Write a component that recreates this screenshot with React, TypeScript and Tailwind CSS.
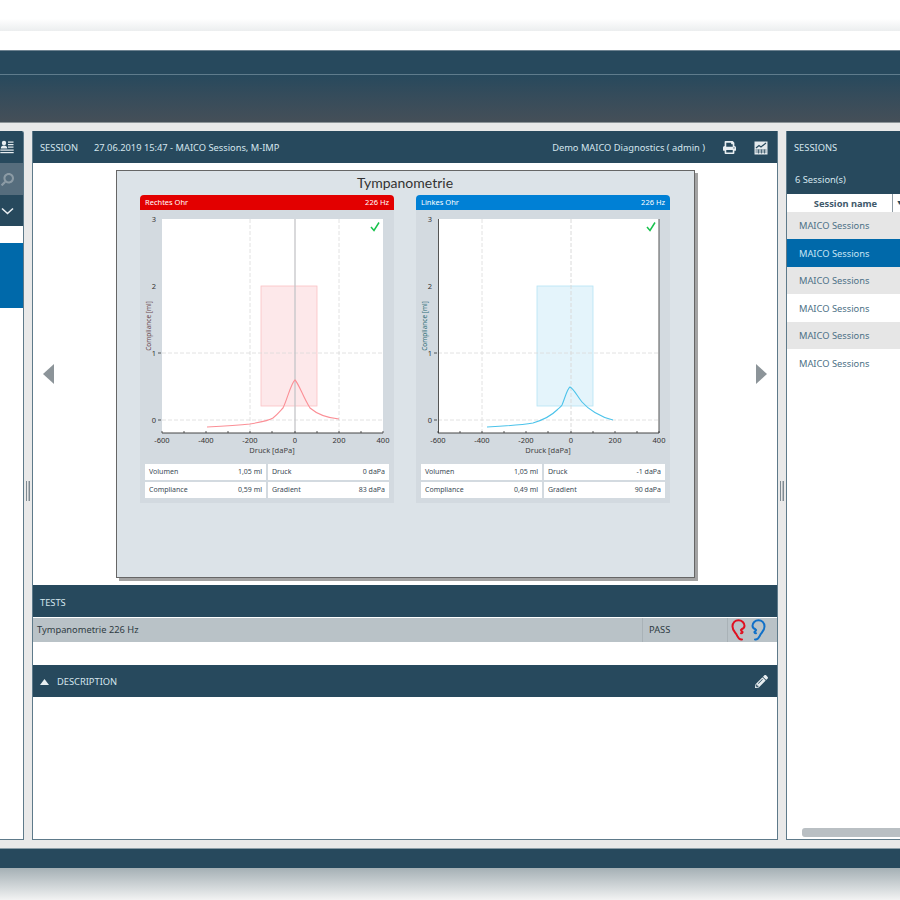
import { FaPrint, FaPencilAlt, FaSearch } from "react-icons/fa";

const font = { fontFamily: '"Noto Sans", "Open Sans", sans-serif' };

function Ear({ color, flip }: { color: string; flip?: boolean }) {
  return (
    <svg width="15" height="22" viewBox="0 0 15 22" fill="none" className={flip ? "-scale-x-100" : ""}>
      <path d="M11 20.500c-3 .5-4-2-5-4C5 14 1.500 12 1.500 7.500 1.500 3.500 4.200 1.300 7.500 1.300c3.500 0 6 2.500 6 5.500 0 2-1.500 3-3 3.500-1 .5-.5 1.500.5 2 1 .7 .5 2-1 2" stroke={color} strokeWidth="2" strokeLinecap="round" strokeLinejoin="round" />
    </svg>
  );
}

function UserListIcon() {
  return (
    <svg width="14" height="14" viewBox="0 0 14 14" fill="#e8eef1">
      <circle cx="4" cy="3" r="2.200" />
      <path d="M0.800 8.500c0-2 1.200-3 3.200-3s3.200 1 3.200 3z" />
      <rect x="8" y="1.500" width="5.500" height="1.200" />
      <rect x="8" y="4" width="5.500" height="1.200" />
      <rect x="8" y="6.500" width="5.500" height="1.200" />
      <rect x="0.300" y="9.500" width="13.400" height="1.200" />
      <rect x="0.300" y="12" width="13.400" height="1.200" />
    </svg>
  );
}

function ReportIcon() {
  return (
    <svg width="14" height="14" viewBox="0 0 14 14">
      <rect x="0.500" y="0.500" width="13" height="13" fill="#e4eaed" />
      <path d="M2 7l3-2.500 2 1.500 5-4" stroke="#27495d" strokeWidth="1.200" fill="none" />
      <path d="M1.500 9h11M1.500 11h11M4.500 8.500v4M7.500 8.500v4M10.500 8.500v4" stroke="#27495d" strokeWidth="0.700" />
    </svg>
  );
}

type ChartProps = {
  title: string;
  head: string;
  curve: string;
  rectFill: string;
  rectStroke: string;
  labelColor: string;
  side: "L" | "R";
  rows: [string, string][];
};

function Chart({ title, head, curve, rectFill, rectStroke, labelColor, side, rows }: ChartProps) {
  const ticks = [22, 66, 110, 155, 199, 243];
  const labels = ["-600", "-400", "-200", "0", "200", "400"];
  const hTicks = [22, 44, 66, 88, 110, 132, 155, 177, 199, 221, 243];
  return (
    <div className="w-[254px] h-[308px] flex flex-col">
      <div className={`h-[15px] rounded-t-[4px] flex items-center justify-between px-[5px] text-[7.5px] text-white ${head}`}>
        <span>{title}</span>
        <span>226 Hz</span>
      </div>
      <div className="flex-1 bg-[#d3dae0] flex flex-col">
        <svg width="254" height="253" viewBox="0 0 254 253" className="block" style={font}>
          <rect x="22" y="9" width="221" height="214" fill="#fff" />
          <rect x="121" y="76" width="56" height="120" fill={rectFill} stroke={rectStroke} strokeWidth="0.800" />
          <path
            d={side === "L" ? "M110 9v214M199 9v214M22 143h221M22 210h221" : "M66 9v214M22 143h221M22 210h221"}
            stroke="#dadada"
            strokeWidth="0.800"
            strokeDasharray="4 2"
          />
          {side === "L" ? (
            <path d="M155 9v214" stroke="#c5c5c8" strokeWidth="1.300" />
          ) : (
            <path d="M155 9v214" stroke="#dadada" strokeWidth="1" strokeDasharray="4 2" />
          )}
          {side === "R" && <path d="M22.500 9v214M243 9v214" stroke="#555" strokeWidth="1" />}
          <path d="M22 223h221" stroke="#444" strokeWidth="1" />
          {hTicks.map((x) => (
            <path key={x} d={`M${x} 223v-2`} stroke="#333" strokeWidth="0.800" />
          ))}
          <path d={curve} fill="none" stroke={side === "L" ? "#fb8f96" : "#4cc3ea"} strokeWidth="1.100" />
          <path d="M231 17l3 3.500 5-8" fill="none" stroke="#17c24c" strokeWidth="1.500" />
          {["3", "2", "1", "0"].map((t, i) => (
            <text key={t} x="16" y={[11.500, 78.500, 145.500, 212.500][i]} fontSize="7.500" textAnchor="end" fill="#333">{t}</text>
          ))}
          <path d="M18 143h3M18 210h3" stroke="#333" strokeWidth="0.800" />
          {ticks.map((x, i) => (
            <text key={x} x={x} y="233" fontSize="7.500" textAnchor="middle" fill="#333">{labels[i]}</text>
          ))}
          <text x="132" y="243" fontSize="7.500" textAnchor="middle" fill="#444">Druck [daPa]</text>
          <text transform="translate(11,116) rotate(-90)" fontSize="6.500" textAnchor="middle" fill={labelColor}>Compliance [ml]</text>
        </svg>
        <div className="grid grid-cols-2 gap-[2px] px-[5px] pt-[1px]">
          {rows.map(([k, v]) => (
            <div key={k} className="bg-white h-[16px] flex items-center justify-between px-[4px] text-[7px] text-[#3a4a55]">
              <span>{k}</span>
              <span>{v}</span>
            </div>
          ))}
        </div>
      </div>
    </div>
  );
}

function Bar({ children, className = "" }: { children: React.ReactNode; className?: string }) {
  return <div className={`h-[32px] shrink-0 bg-[#27495d] flex items-center text-[#d5e6ee] text-[9.3px] pt-[1px] ${className}`}>{children}</div>;
}

function Grip() {
  return (
    <div className="w-[8px] shrink-0 flex items-center justify-center">
      <div className="w-[4px] h-[20px] border-x border-[#7f8a91] mt-[10px] flex justify-center">
        <div className="w-px h-full bg-[#b7bdc1]" />
      </div>
    </div>
  );
}

const sessions = [
  "bg-[#e6e6e6] h-[27px] text-[#4d7186]",
  "bg-[#0069aa] h-[28px] text-[#c7e4f4]",
  "bg-[#e6e6e6] h-[27px] text-[#4d7186]",
  "bg-white h-[28px] text-[#4d7186]",
  "bg-[#e6e6e6] h-[27px] text-[#4d7186]",
  "bg-white h-[28px] text-[#4d7186]",
];

export default function App() {
  return (
    <div className="w-[900px] h-[900px] overflow-hidden flex flex-col bg-white" style={font}>
      <div className="h-[31px] shrink-0 bg-gradient-to-b from-white from-60% to-[#eceeef] " />
      <div className="h-[19px] shrink-0 bg-white" />

      <div className="h-[24px] shrink-0 bg-[#27495d] border-t border-[#6d8290]" />
      <div className="h-px shrink-0 bg-[#5f7c8c]" />
      <div className="h-[48px] shrink-0 bg-gradient-to-b from-[#27495d] to-[#454f58] border-b border-[#8d9498]" />

      <div className="flex-1 min-h-0 bg-[#e9e9e9] pt-[8px] pb-[8px] flex">
        <div className="w-[24px] shrink-0 flex flex-col bg-white border-r border-b border-[#5e7a8a] rounded-tr-[2px] overflow-hidden">
          <div className="h-[32px] bg-[#27495d] flex items-center justify-end pr-[9px]"><UserListIcon /></div>
          <div className="h-[32px] bg-[#566d7d] flex items-center justify-end pr-[9px]">
            <FaSearch className="text-[#8c9ba5] text-[13px] -scale-x-100" />
          </div>
          <div className="h-[31px] bg-[#27495d] flex items-center justify-end pr-[9px]">
            <svg width="13" height="8" viewBox="0 0 13 8" fill="none"><path d="M1 1.500l5.500 5 5.500-5" stroke="#e8eef1" strokeWidth="1.600" /></svg>
          </div>
          <div className="h-[17px]" />
          <div className="h-[65px] bg-[#0069aa]" />
        </div>

        <Grip />

        <div className="w-[746px] shrink-0 flex flex-col bg-white border-x border-b border-[#5e7a8a]">
          <Bar className="pl-[7px] pr-[9px]">
            <span>SESSION</span>
            <span className="ml-[16px]">27.06.2019 15:47 - MAICO Sessions, M-IMP</span>
            <span className="ml-auto">Demo MAICO Diagnostics ( admin )</span>
            <FaPrint className="ml-[18px] text-[#e8eef1] text-[13px]" />
            <span className="ml-[18px] flex"><ReportIcon /></span>
          </Bar>

          <div className="h-[422px] shrink-0 flex items-center justify-between px-[10px]">
            <svg width="12" height="20" viewBox="0 0 12 20" fill="#8c9499"><path d="M11 0v20L0 10z" /></svg>
            <div className="w-[579px] h-[408px] bg-[#dce3e8] border border-[#666] shadow-[3px_3px_0_#a3a3a3] flex flex-col items-center">
              <div className="h-[24px] flex items-center justify-center text-[14px] text-[#333] leading-none" style={{ fontFamily: '"Lato", sans-serif' }}>Tympanometrie</div>
              <div className="flex gap-[22px]">
                <Chart
                  title="Rechtes Ohr"
                  head="bg-[#e30000]"
                  side="L"
                  labelColor="#6b4a50"
                  rectFill="#fde8ea"
                  rectStroke="#fbc0c4"
                  curve="M67 217C85 216 100 215 110 214 122 212 130 210 133 208 138 204 141 200 143 198 147 190 151 173 155 170 159 174 163 187 170 198 177 204 188 208 199 209"
                  rows={[["Volumen", "1,05 ml"], ["Druck", "0 daPa"], ["Compliance", "0,59 ml"], ["Gradient", "83 daPa"]]}
                />
                <Chart
                  title="Linkes Ohr"
                  head="bg-[#0080d5]"
                  side="R"
                  labelColor="#2f6f78"
                  rectFill="#e4f4fb"
                  rectStroke="#b5e4f5"
                  curve="M71 217C90 216 105 215 117 213 127 210 136 205 141 200 143 198 145 197 146 195 149 188 151 179 154 177 158 179 161 186 166 192 172 199 184 207 197 210"
                  rows={[["Volumen", "1,05 ml"], ["Druck", "-1 daPa"], ["Compliance", "0,49 ml"], ["Gradient", "90 daPa"]]}
                />
              </div>
            </div>
            <svg width="12" height="20" viewBox="0 0 12 20" fill="#8c9499"><path d="M1 0v20l11-10z" /></svg>
          </div>

          <Bar className="pl-[7px] pt-[3px]">TESTS</Bar>
          <div className="h-[24px] shrink-0 mt-px bg-[#b9c2c7] flex items-center text-[9.3px] text-[#2f3b43]">
            <span className="flex-1 pl-[4px]">Tympanometrie 226 Hz</span>
            <span className="w-[85px] h-full flex items-center pl-[6px] border-l border-[#a9b2b7]">PASS</span>
            <span className="w-[50px] h-full flex items-center gap-[5px] pl-[3px] border-l border-[#a9b2b7]">
              <Ear color="#e01020" />
              <Ear color="#1070c8" flip />
            </span>
          </div>
          <div className="h-[23px] shrink-0" />
          <Bar className="pl-[7px] pr-[9px]">
            <svg width="9" height="6" viewBox="0 0 9 6" fill="#e8eef1"><path d="M4.500 0L9 6H0z" /></svg>
            <span className="ml-[8px]">DESCRIPTION</span>
            <FaPencilAlt className="ml-auto text-[#e8eef1] text-[13px]" />
          </Bar>
          <div className="flex-1" />
        </div>

        <Grip />

        <div className="flex-1 min-w-0 flex flex-col bg-white border-l border-b border-[#5e7a8a] overflow-hidden">
          <div className="h-[63px] shrink-0 bg-[#27495d] flex flex-col text-[#d5e6ee] text-[9.3px] pl-[7px]">
            <div className="h-[32px] flex items-center pt-[1px]">SESSIONS</div>
            <div className="h-[31px] flex items-center pl-[1px] pt-[3px]">6 Session(s)</div>
          </div>
          <div className="h-[18px] shrink-0 flex items-center text-[9.3px] font-bold text-[#3f5a6b]">
            <span className="w-[106px] h-full pl-[12px] pt-[1px] text-center border-r border-[#8d9aa3] flex items-center justify-center shrink-0">Session name</span>
            <span className="pl-[3px] text-[7px] text-[#27495d]">▼</span>
          </div>
          {sessions.map((c, i) => (
            <div key={i} className={`${c} shrink-0 flex items-center pl-[12px] pt-[1px] text-[9.3px]`}>MAICO Sessions</div>
          ))}
          <div className="flex-1 flex items-end pl-[15px] pb-[2px]">
            <div className="w-full h-[9px] rounded-l-[3px] bg-[#b9bfc3]" />
          </div>
        </div>
      </div>

      <div className="h-[20px] shrink-0 bg-[#27495d] border-t border-[#8d9ea8]" />
      <div className="h-[32px] shrink-0 bg-gradient-to-b from-[#a5b0b5] to-[#f2f3f3]" />
    </div>
  );
}
